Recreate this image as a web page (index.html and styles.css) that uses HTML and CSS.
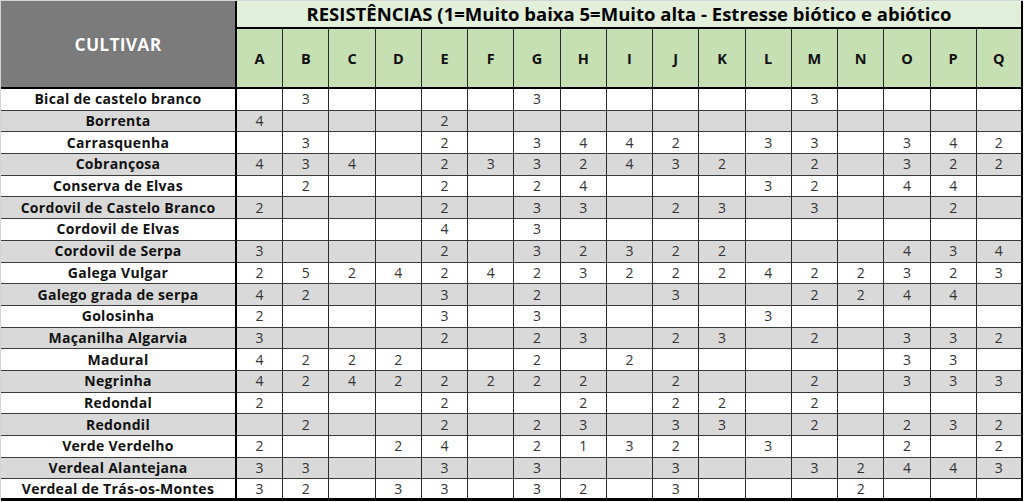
FILE: index.html
```html
<!DOCTYPE html>
<html lang="pt">
<head>
<meta charset="utf-8">
<title>Resistências</title>
<link rel="stylesheet" href="styles.css">
</head>
<body>
<table class="grid">
  <colgroup>
    <col class="c-name">
    <col span="17">
  </colgroup>
  <thead>
    <tr class="r-title">
      <th class="cultivar" rowspan="2">CULTIVAR</th>
      <th class="title" colspan="17">RESISTÊNCIAS (1=Muito baixa 5=Muito alta - Estresse biótico e abiótico</th>
    </tr>
    <tr class="r-letters">
      <th>A</th><th>B</th><th>C</th><th>D</th><th>E</th><th>F</th><th>G</th><th>H</th><th>I</th><th>J</th><th>K</th><th>L</th><th>M</th><th>N</th><th>O</th><th>P</th><th class="last">Q</th>
    </tr>
  </thead>
  <tbody id="body"></tbody>
</table>
<script src="script.js"></script>
</body>
</html>
```

FILE: script.js
```js
const rows = [
  ["Bical de castelo branco",     "", "3","", "", "", "", "3","", "", "", "", "", "3","", "", "", ""],
  ["Borrenta",                    "4","", "", "", "2","", "", "", "", "", "", "", "", "", "", "", ""],
  ["Carrasquenha",                "", "3","", "", "2","", "3","4","4","2","", "3","3","", "3","4","2"],
  ["Cobrançosa",                  "4","3","4","", "2","3","3","2","4","3","2","", "2","", "3","2","2"],
  ["Conserva de Elvas",           "", "2","", "", "2","", "2","4","", "", "", "3","2","", "4","4",""],
  ["Cordovil de Castelo Branco",  "2","", "", "", "2","", "3","3","", "2","3","", "3","", "", "2",""],
  ["Cordovil de Elvas",           "", "", "", "", "4","", "3","", "", "", "", "", "", "", "", "", ""],
  ["Cordovil de Serpa",           "3","", "", "", "2","", "3","2","3","2","2","", "", "", "4","3","4"],
  ["Galega Vulgar",               "2","5","2","4","2","4","2","3","2","2","2","4","2","2","3","2","3"],
  ["Galego grada de serpa",       "4","2","", "", "3","", "2","", "", "3","", "", "2","2","4","4",""],
  ["Golosinha",                   "2","", "", "", "3","", "3","", "", "", "", "3","", "", "", "", ""],
  ["Maçanilha Algarvia",          "3","", "", "", "2","", "2","3","", "2","3","", "2","", "3","3","2"],
  ["Madural",                     "4","2","2","2","", "", "2","", "2","", "", "", "", "", "3","3",""],
  ["Negrinha",                    "4","2","4","2","2","2","2","2","", "2","", "", "2","", "3","3","3"],
  ["Redondal",                    "2","", "", "", "2","", "", "2","", "2","2","", "2","", "", "", ""],
  ["Redondil",                    "", "2","", "", "2","", "2","3","", "3","3","", "2","", "2","3","2"],
  ["Verde Verdelho",              "2","", "", "2","4","", "2","1","3","2","", "3","", "", "2","", "2"],
  ["Verdeal Alantejana",          "3","3","", "", "3","", "3","", "", "3","", "", "3","2","4","4","3"],
  ["Verdeal de Trás-os-Montes",   "3","2","", "3","3","", "3","2","", "3","", "", "", "2","", "", ""]
];
const body = document.getElementById("body");
rows.forEach((r, i) => {
  const tr = document.createElement("tr");
  tr.className = i % 2 ? "alt" : "";
  r.forEach((v, j) => {
    const td = document.createElement("td");
    td.textContent = v;
    if (j === 0) td.className = "name";
    if (j === r.length - 1) td.classList.add("last");
    tr.appendChild(td);
  });
  body.appendChild(tr);
});
```

FILE: styles.css
```css
html, body {
  margin: 0;
  padding: 0;
  background: #ffffff;
}

.grid {
  width: 1023px;
  table-layout: fixed;
  border-collapse: separate;
  border-spacing: 0;
  border-top: 1px solid #d4d4d4;
  border-left: 1px solid #d4d4d4;
  font-family: "Open Sans", "DejaVu Sans", sans-serif;
}

.c-name {
  width: 236px;
}

.grid th,
.grid td {
  padding: 0;
  text-align: center;
  vertical-align: middle;
  overflow: hidden;
  white-space: nowrap;
}

.cultivar {
  background: #7b7b7b;
  color: #ffffff;
  font-size: 17.5px;
  font-weight: 700;
  letter-spacing: 0.2px;
  text-shadow: 0 0 1px rgba(0, 0, 0, 0.35);
  border-right: 2px solid #000;
  border-bottom: 2px solid #000;
  padding-bottom: 6px;
}

.r-title th.title {
  height: 26px;
  background: #e2efda;
  color: #000;
  font-size: 18.5px;
  font-weight: 700;
  line-height: 26px;
  border-bottom: 2px solid #000;
  border-right: 2px solid #000;
}

.r-letters th {
  height: 58px;
  background: #c6e0b4;
  color: #111;
  font-size: 14.5px;
  font-weight: 700;
  border-right: 1px solid #2a2a2a;
  border-bottom: 2px solid #000;
}

.r-letters th.last {
  border-right: 2px solid #000;
}

tbody tr {
  height: 21.7px;
}

tbody td {
  font-size: 14px;
  color: #333333;
  line-height: 18px;
  border-right: 1px solid #2a2a2a;
  border-bottom: 1px solid #3a3a3a;
}

tbody tr.alt td {
  background: #d9d9d9;
}

tbody td.name {
  font-family: "Open Sans", sans-serif;
  font-weight: 700;
  font-size: 14px;
  letter-spacing: 0.3px;
  color: #111;
  border-right: 2px solid #000;
}

tbody td.last {
  border-right: 2px solid #000;
}

tbody tr:last-child td {
  border-bottom: 3px solid #000;
}
```
